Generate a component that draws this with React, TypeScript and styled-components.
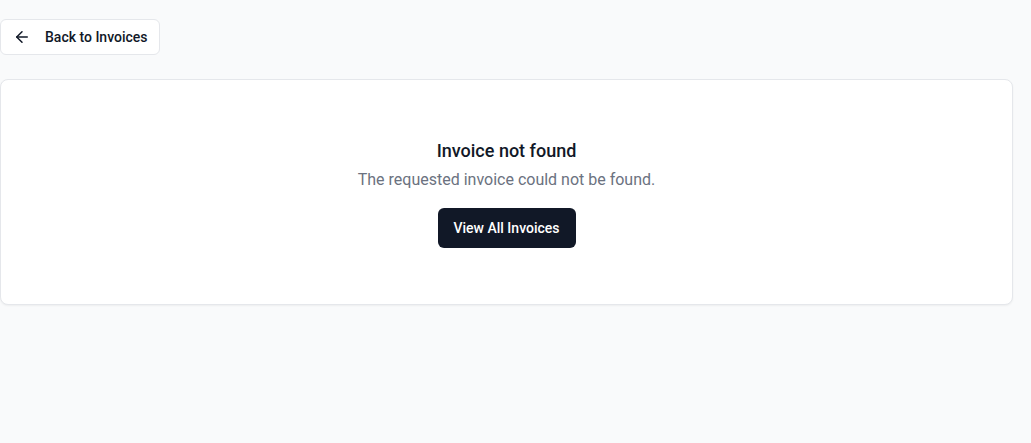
import React from "react";
import styled, { createGlobalStyle } from "styled-components";

const Global = createGlobalStyle`
  html, body { margin: 0; padding: 0; background: #f9fafb; }
  body { font-family: Roboto, "Liberation Sans", sans-serif; color: #111827; }
  * { box-sizing: border-box; }
`;

const Page = styled.div`
  display: flex;
  flex-direction: column;
  gap: 24px;
  padding: 19px 18px 0 0;
  min-height: 443px;
`;

const BackButton = styled.button`
  align-self: flex-start;
  display: inline-flex;
  align-items: center;
  gap: 14px;
  height: 36px;
  padding: 0 11px 0 12px;
  background: #ffffff;
  border: 1px solid #e5e7eb;
  border-radius: 6px;
  font-family: inherit;
  font-size: 14px;
  font-weight: 500;
  white-space: nowrap;
  color: #111827;
  cursor: pointer;
`;

const Card = styled.div`
  background: #ffffff;
  border: 1px solid #e5e7eb;
  border-radius: 8px;
  box-shadow: 0 1px 2px rgba(0, 0, 0, 0.05);
  padding: 57px 24px 56px;
  display: flex;
  flex-direction: column;
  align-items: center;
  text-align: center;
`;

const Title = styled.h2`
  margin: 0;
  font-size: 18px;
  line-height: 28px;
  font-weight: 500;
  color: #111827;
`;

const Subtitle = styled.p`
  margin: 3px 0 16px;
  font-size: 16px;
  line-height: 24px;
  color: #6b7280;
`;

const PrimaryButton = styled.button`
  height: 40px;
  padding: 0 16px;
  background: #111827;
  color: #ffffff;
  border: none;
  border-radius: 6px;
  font-family: inherit;
  font-size: 14px;
  font-weight: 500;
  white-space: nowrap;
  cursor: pointer;
`;

const ArrowLeft = () => (
  <svg width="18" height="18" viewBox="0 0 24 24" fill="none" stroke="currentColor" strokeWidth="2" strokeLinecap="round" strokeLinejoin="round">
    <path d="m12 19-7-7 7-7" />
    <path d="M19 12H5" />
  </svg>
);

export default function App() {
  return (
    <>
      <Global />
      <Page>
        <BackButton>
          <ArrowLeft />
          Back to Invoices
        </BackButton>
        <Card>
          <Title>Invoice not found</Title>
          <Subtitle>The requested invoice could not be found.</Subtitle>
          <PrimaryButton>View All Invoices</PrimaryButton>
        </Card>
      </Page>
    </>
  );
}
